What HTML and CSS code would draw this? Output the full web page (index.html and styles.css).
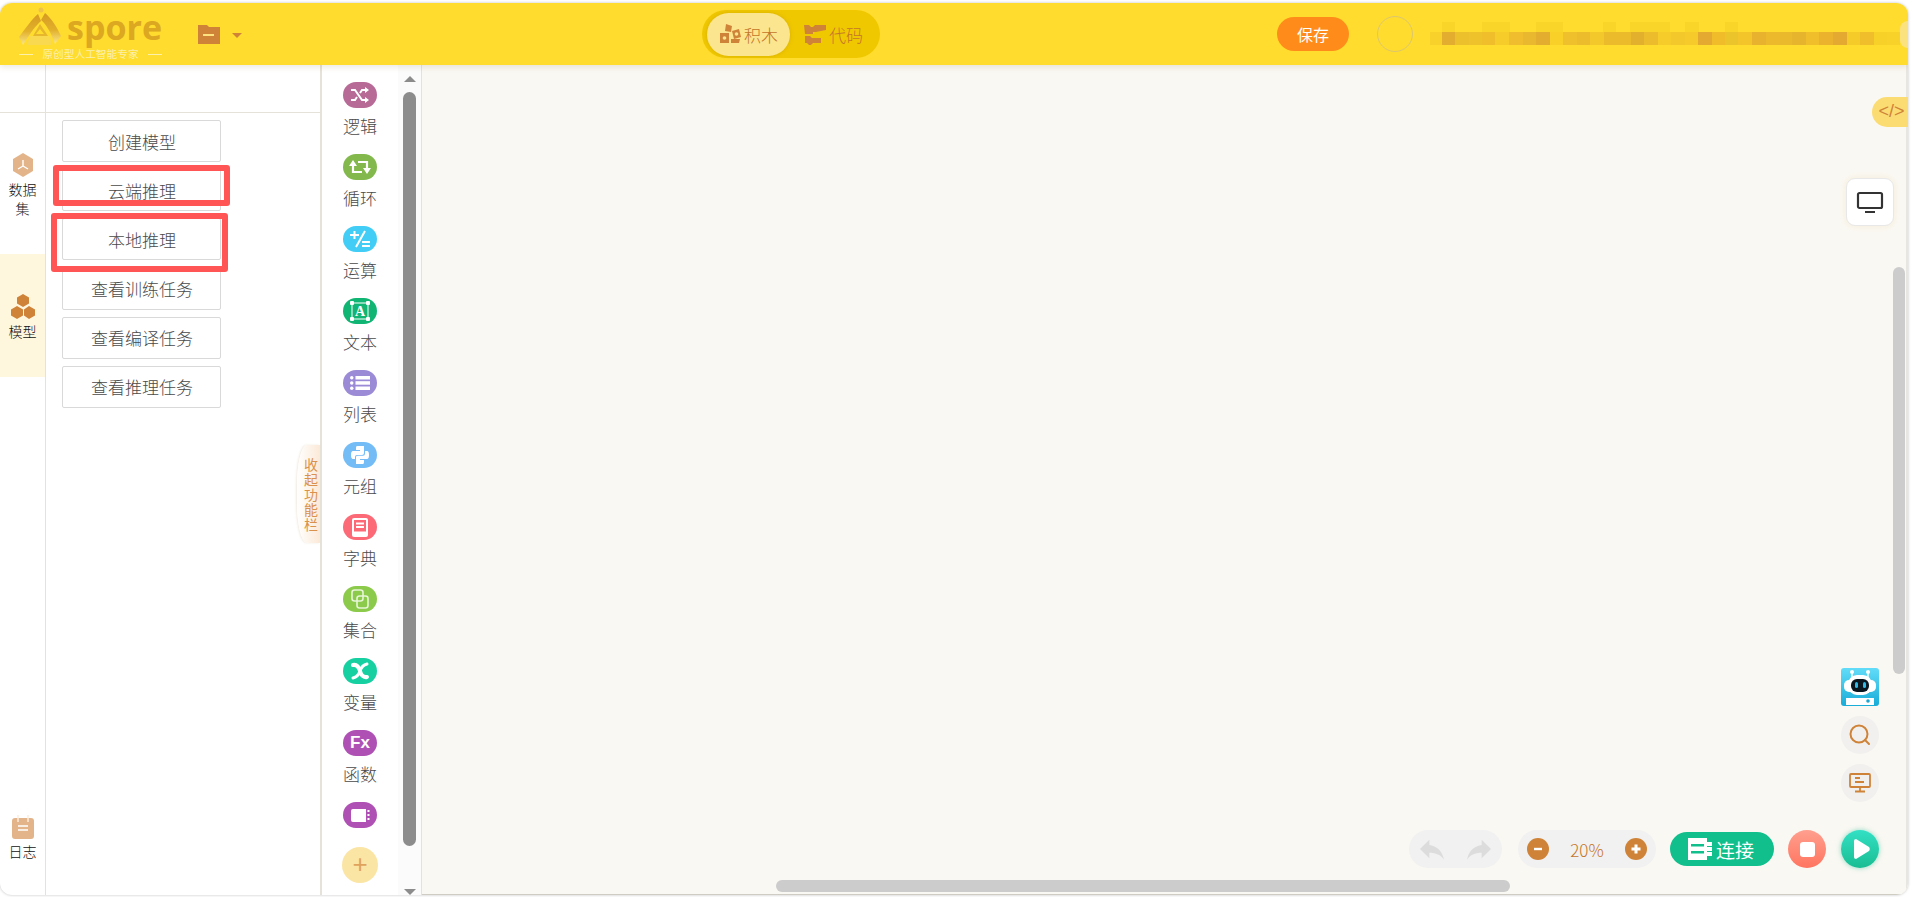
FILE: index.html
```html
<!DOCTYPE html>
<html lang="zh-CN">
  <head>
    <meta charset="UTF-8" />
    <title>spore</title>
    <link rel="stylesheet" href="styles.css">
  </head>
  <body>
    <div class="app">
      <!-- 顶部栏 -->
      <div class="header">
        <div class="logo">
          <div class="logo-top">
            <svg class="logo-mark" width="44" height="40" viewBox="0 0 44 40">
              <defs>
                <linearGradient id="logoGold" x1="0" y1="0" x2="0" y2="1">
                  <stop offset="0" stop-color="#d59a22" />
                  <stop offset="0.55" stop-color="#e2b02a" />
                  <stop offset="1" stop-color="#fbe78a" />
                </linearGradient>
              </defs>
              <circle cx="23" cy="3" r="2.500" fill="#efc34a" />
              <path d="M20 7 C14 12 7 22 1 30 L5 38 C10 30 16 20 23 14 Z" fill="url(#logoGold)" />
              <path d="M27 6 C33 11 39 20 43 29 L37 37 C34 28 29 18 23 13 Z" fill="url(#logoGold)" />
              <path d="M22 17 L30 29 H15 Z M22 22 L18 27 H26 Z" fill="#e6b72c" fill-rule="evenodd" />
              <path d="M12 29 H32 L34 38 H9 Z" fill="#f8d94f" />
            </svg>
            <span class="logo-name">spore</span>
          </div>
          <div class="logo-sub"><i></i><span>原创型人工智能专家</span><i></i></div>
        </div>

        <svg class="folder" width="22" height="20" viewBox="0 0 22 20">
          <path d="M0 1 H9 L11 3 H22 V20 H0 Z" fill="#cf8338" />
          <rect x="5" y="10" width="11" height="2" fill="#fde27f" />
        </svg>
        <span class="caret"></span>

        <div class="mode-switch">
          <div class="mode mode-active">
            <svg width="22" height="22" viewBox="0 0 22 22">
              <path d="M7 1 L13 3 L12 9 L6 8 Z M13 8 L20 6 L22 14 L15 16 Z M1 10 L10 10 L10 20 L1 20 Z M12 16 L21 16 L20 20 L12 20 Z" fill="#cf8338" />
              <circle cx="5.500" cy="15" r="1.800" fill="#fbe58f" />
              <circle cx="17.500" cy="11" r="1.800" fill="#fbe58f" />
            </svg>
            <span>积木</span>
          </div>
          <div class="mode">
            <svg width="22" height="22" viewBox="0 0 22 22">
              <path d="M0 2 H5 L7 4 H9 L11 2 H22 V7 L12 9 H9 V11 H1 Z" fill="#cf8338" />
              <path d="M1 13 H6 L8 15 H17 V20 H9 L7 22 H5 L3 20 H1 Z" fill="#cf8338" />
            </svg>
            <span>代码</span>
          </div>
        </div>

        <button class="save-btn">保存</button>
        <div class="avatar"></div>

        <!-- 打码区域 -->
        <svg class="mosaic" width="470" height="24" viewBox="0 0 470 24">
          <g fill="#f9d52a">
            <rect x="12" y="0" width="13" height="10" />
            <rect x="52" y="0" width="28" height="10" />
            <rect x="106" y="0" width="27" height="10" />
            <rect x="173" y="0" width="13" height="10" />
            <rect x="200" y="0" width="40" height="10" />
            <rect x="255" y="0" width="14" height="10" />
            <rect x="295" y="0" width="13" height="10" />
          </g>
          <g>
            <rect x="0" y="10" width="12" height="13" fill="#f8d22a" />
            <rect x="12" y="10" width="13" height="13" fill="#e3ae30" />
            <rect x="25" y="10" width="14" height="13" fill="#ebc02c" />
            <rect x="39" y="10" width="13" height="13" fill="#eec22a" />
            <rect x="52" y="10" width="13" height="13" fill="#f0be2a" />
            <rect x="65" y="10" width="14" height="13" fill="#f5cc2a" />
            <rect x="79" y="10" width="14" height="13" fill="#efbd2d" />
            <rect x="93" y="10" width="13" height="13" fill="#e9b82f" />
            <rect x="106" y="10" width="14" height="13" fill="#e3ad30" />
            <rect x="120" y="10" width="13" height="13" fill="#f8d028" />
            <rect x="133" y="10" width="14" height="13" fill="#efc02c" />
            <rect x="147" y="10" width="13" height="13" fill="#ecbc2c" />
            <rect x="160" y="10" width="14" height="13" fill="#f2c82a" />
            <rect x="174" y="10" width="27" height="13" fill="#ebbb2c" />
            <rect x="201" y="10" width="13" height="13" fill="#e3b02e" />
            <rect x="214" y="10" width="14" height="13" fill="#ecbc2c" />
            <rect x="228" y="10" width="13" height="13" fill="#f5cc2a" />
            <rect x="241" y="10" width="14" height="13" fill="#f3c82a" />
            <rect x="255" y="10" width="13" height="13" fill="#f5ca2a" />
            <rect x="268" y="10" width="14" height="13" fill="#e3a930" />
            <rect x="282" y="10" width="13" height="13" fill="#f0bc2a" />
            <rect x="295" y="10" width="13" height="13" fill="#ebc42c" />
            <rect x="308" y="10" width="14" height="13" fill="#f3c52a" />
            <rect x="322" y="10" width="14" height="13" fill="#e8b12e" />
            <rect x="336" y="10" width="13" height="13" fill="#ecb92c" />
            <rect x="349" y="10" width="13" height="13" fill="#ebb92c" />
            <rect x="362" y="10" width="14" height="13" fill="#e7b42e" />
            <rect x="376" y="10" width="13" height="13" fill="#efbe2a" />
            <rect x="389" y="10" width="14" height="13" fill="#ebb22d" />
            <rect x="403" y="10" width="14" height="13" fill="#e3a930" />
            <rect x="417" y="10" width="13" height="13" fill="#f5cb2a" />
            <rect x="430" y="10" width="14" height="13" fill="#efbe2a" />
            <rect x="444" y="10" width="13" height="13" fill="#f7d028" />
            <rect x="457" y="10" width="13" height="13" fill="#f8d228" />
          </g>
        </svg>
        <span class="user-tab"></span>
      </div>

      <div class="main">
        <!-- 左侧功能栏 -->
        <div class="rail">
          <div class="rail-head"></div>
          <div class="rail-item rail-first">
            <svg width="24" height="24" viewBox="0 0 24 24">
              <path d="M12 0 L22 6 V18 L12 24 L2 18 V6 Z" fill="#e3b48a" />
              <path d="M12 7 V13 M12 13 L7 16 M12 13 L17 16" stroke="#fff" stroke-width="1.400" fill="none" />
            </svg>
            <div class="rail-label">数据集</div>
          </div>
          <div class="rail-item active">
            <svg width="26" height="25" viewBox="0 0 26 25">
              <path d="M13 0 L19 3.500 V9.500 L13 13 L7 9.500 V3.500 Z" fill="#cf8338" />
              <path d="M7 12 L13 15.500 V21.500 L7 25 L1 21.500 V15.500 Z" fill="#cf8338" />
              <path d="M19 12 L25 15.500 V21.500 L19 25 L14 21.500 V15.500 Z" fill="#cf8338" />
            </svg>
            <div class="rail-label">模型</div>
          </div>
          <div class="rail-item rail-log">
            <svg width="24" height="24" viewBox="0 0 24 24">
              <rect x="1" y="3" width="22" height="21" rx="3" fill="#e3b48a" />
              <path d="M7 0 V7 M17 0 V7" stroke="#fbeedd" stroke-width="1.500" />
              <path d="M7 11 H17 M7 15 H17" stroke="#fff" stroke-width="1.500" />
            </svg>
            <div class="rail-label">日志</div>
          </div>
        </div>

        <div class="panel">
          <div class="panel-head"></div>
          <div class="panel-list">
            <button class="panel-btn">创建模型</button>
            <button class="panel-btn">云端推理</button>
            <button class="panel-btn">本地推理</button>
            <button class="panel-btn">查看训练任务</button>
            <button class="panel-btn">查看编译任务</button>
            <button class="panel-btn">查看推理任务</button>
          </div>
          <!-- 标注框 -->
          <div class="mark mark-cloud"></div>
          <div class="mark mark-local"></div>
          <div class="collapse">收起功能栏</div>
        </div>

        <!-- 积木分类 -->
        <div class="toolbox">
          <div class="cat-list">
            <div class="cat">
              <div class="pill pill-logic">
                <svg width="20" height="16" viewBox="0 0 20 16" fill="none" stroke="#fff" stroke-width="2">
                  <path d="M1 3 H5 L12 13 H16 M1 13 H5 L7 10 M10 6 L12 3 H16" />
                  <path d="M15 0 L19 3 L15 6 Z M15 10 L19 13 L15 16 Z" fill="#fff" stroke="none" />
                </svg>
              </div>
              <div class="cat-label">逻辑</div>
            </div>
            <div class="cat">
              <div class="pill pill-loop">
                <svg width="22" height="16" viewBox="0 0 22 16" fill="none" stroke="#fff" stroke-width="2.200">
                  <path d="M4 6 V13 H13 M18 10 V3 H9" />
                  <path d="M0 7 H8 L4 1 Z M14 9 H22 L18 15 Z" fill="#fff" stroke="none" />
                </svg>
              </div>
              <div class="cat-label">循环</div>
            </div>
            <div class="cat">
              <div class="pill pill-math">
                <svg width="20" height="18" viewBox="0 0 20 18" fill="none" stroke="#fff" stroke-width="2">
                  <path d="M0 5 H9 M4.500 1 V9 M15 1 L6 17 M12 12 H20 M12 16 H20" />
                </svg>
              </div>
              <div class="cat-label">运算</div>
            </div>
            <div class="cat">
              <div class="pill pill-text">
                <svg width="20" height="20" viewBox="0 0 20 20">
                  <rect x="2" y="2" width="16" height="16" fill="none" stroke="#fff" stroke-width="1" />
                  <g fill="#fff">
                    <rect x="0" y="0" width="4" height="4" rx="1" />
                    <rect x="16" y="0" width="4" height="4" rx="1" />
                    <rect x="0" y="16" width="4" height="4" rx="1" />
                    <rect x="16" y="16" width="4" height="4" rx="1" />
                  </g>
                  <text class="pill-a" x="10" y="15" text-anchor="middle">A</text>
                </svg>
              </div>
              <div class="cat-label">文本</div>
            </div>
            <div class="cat">
              <div class="pill pill-list">
                <svg width="20" height="14" viewBox="0 0 20 14" fill="#fff">
                  <rect x="0" y="0" width="3.500" height="3.500" rx="1.700" />
                  <rect x="0" y="5.200" width="3.500" height="3.500" rx="1.700" />
                  <rect x="0" y="10.500" width="3.500" height="3.500" rx="1.700" />
                  <rect x="5.500" y="0" width="14.500" height="3.500" />
                  <rect x="5.500" y="5.200" width="14.500" height="3.500" />
                  <rect x="5.500" y="10.500" width="14.500" height="3.500" />
                </svg>
              </div>
              <div class="cat-label">列表</div>
            </div>
            <div class="cat">
              <div class="pill pill-tuple">
                <svg width="18" height="18" viewBox="0 0 18 18" fill="#fff">
                  <path d="M6 0 H13 V7 Q13 9 11 9 H6 Q4 9 4 11 V13 H2 Q0 13 0 9 T2 5 H9 V4 H5 V2 Q5 0 6 0 Z" />
                  <path d="M12 18 H5 V11 Q5 9.800 7 9.800 H12 Q14 9.800 14 7.500 V5 H16 Q18 5 18 9 T16 13 H9 V14 H13 V16 Q13 18 12 18 Z" />
                </svg>
              </div>
              <div class="cat-label">元组</div>
            </div>
            <div class="cat">
              <div class="pill pill-dict">
                <svg width="16" height="19" viewBox="0 0 16 19">
                  <path d="M2 0 H14 Q16 0 16 2 V17 Q16 19 14 19 H2 Q0 19 0 17 V2 Q0 0 2 0 Z" fill="#fff" />
                  <rect x="2" y="2" width="12" height="11.500" fill="#fb6a76" />
                  <path d="M4 5.500 H12 M4 9 H12" stroke="#fff" stroke-width="1.800" />
                </svg>
              </div>
              <div class="cat-label">字典</div>
            </div>
            <div class="cat">
              <div class="pill pill-set">
                <svg width="18" height="20" viewBox="0 0 18 20" fill="none" stroke="#e8f5d8" stroke-width="1.600">
                  <rect x="1" y="1" width="11" height="11" rx="2.500" />
                  <rect x="6" y="7" width="11" height="12" rx="2.500" />
                </svg>
              </div>
              <div class="cat-label">集合</div>
            </div>
            <div class="cat">
              <div class="pill pill-var">
                <svg width="20" height="20" viewBox="0 0 20 20" fill="none" stroke="#fff" stroke-linecap="round">
                  <path d="M3 4 Q8 3 10 10 T17 16" stroke-width="4" />
                  <path d="M17 3 Q12 4 10 10 T3 17" stroke-width="3" />
                </svg>
              </div>
              <div class="cat-label">变量</div>
            </div>
            <div class="cat">
              <div class="pill pill-func"><span>Fx</span></div>
              <div class="cat-label">函数</div>
            </div>
            <div class="cat cat-last">
              <div class="pill pill-func">
                <svg width="19" height="13" viewBox="0 0 19 13" fill="#fff">
                  <path d="M2 0 H15 V13 H2 Q0 13 0 11 V2 Q0 0 2 0 Z" />
                  <rect x="16.500" y="1" width="2" height="2" />
                  <rect x="16.500" y="5" width="2" height="2" />
                  <rect x="16.500" y="9" width="2" height="2" />
                </svg>
              </div>
            </div>
            <div class="add-btn">+</div>
          </div>
          <div class="cat-scroll">
            <span class="arrow-up"></span>
            <span class="cat-thumb"></span>
            <span class="arrow-down"></span>
          </div>
        </div>

        <!-- 画布 -->
        <div class="canvas">
          <div class="code-tab">&lt;/&gt;</div>

          <div class="screen-btn">
            <svg width="28" height="22" viewBox="0 0 28 22" fill="none" stroke="#333" stroke-width="2">
              <rect x="2" y="2" width="24" height="15" rx="1.500" stroke-width="2.200" />
              <path d="M9 21 H19" />
            </svg>
          </div>

          <div class="side-tools">
            <svg class="robot" width="38" height="38" viewBox="0 0 38 38">
              <defs>
                <linearGradient id="robotBg" x1="0" y1="0" x2="0" y2="1">
                  <stop offset="0" stop-color="#62dcf8" />
                  <stop offset="1" stop-color="#18acd8" />
                </linearGradient>
              </defs>
              <rect width="38" height="38" rx="3" fill="url(#robotBg)" />
              <path d="M11 4 V10 M27 4 V10" stroke="#fff" stroke-width="1.400" />
              <circle cx="11" cy="4" r="2" fill="#fff" />
              <circle cx="27" cy="4" r="2" fill="#fff" />
              <rect x="3" y="12" width="32" height="12" rx="5" fill="#fff" />
              <rect x="7" y="7" width="24" height="20" rx="9" fill="#fff" />
              <rect x="10" y="11" width="18" height="13" rx="6" fill="#0a1620" />
              <rect x="14" y="14" width="3" height="6" rx="1.500" fill="#2fb9e4" />
              <rect x="22" y="14" width="3" height="6" rx="1.500" fill="#2fb9e4" />
              <rect x="5" y="30" width="28" height="7" fill="#fff" />
              <circle cx="27" cy="33" r="1.800" fill="#1ea5cf" />
            </svg>
            <div class="round-tool">
              <svg width="22" height="22" viewBox="0 0 22 22" fill="none" stroke="#cf8338" stroke-width="2">
                <circle cx="10" cy="10" r="8.500" />
                <path d="M16 16 L20 20" stroke-linecap="round" />
              </svg>
            </div>
            <div class="round-tool">
              <svg width="22" height="20" viewBox="0 0 22 20" fill="none" stroke="#cf8338" stroke-width="1.800">
                <rect x="1" y="1" width="20" height="13" rx="1" />
                <path d="M6 5 H11 M6 9 H15 M11 14 V18 M6 18.500 H16" />
              </svg>
            </div>
          </div>

          <div class="bottom-tools">
            <div class="tool-pill history">
              <svg width="32" height="32" viewBox="0 0 24 24" fill="#dcdcdc"><path d="M10 9V5l-7 7 7 7v-4.100c5 0 8.500 1.600 11 5.100-1-5-4-10-11-11z" /></svg>
              <svg width="32" height="32" viewBox="0 0 24 24" fill="#dcdcdc"><path d="M14 9V5l7 7-7 7v-4.100c-5 0-8.500 1.600-11 5.100 1-5 4-10 11-11z" /></svg>
            </div>
            <div class="tool-pill zoom">
              <span class="zoom-btn">
                <svg width="10" height="10" viewBox="0 0 10 10"><rect x="1" y="3.800" width="8" height="2.400" fill="#fff" /></svg>
              </span>
              <span class="zoom-value">20%</span>
              <span class="zoom-btn">
                <svg width="10" height="10" viewBox="0 0 10 10"><path d="M0.500 3.500 H3.500 V0.500 H6.500 V3.500 H9.500 V6.500 H6.500 V9.500 H3.500 V6.500 H0.500 Z" fill="#fff" /></svg>
              </span>
            </div>
            <button class="connect-btn">
              <svg width="24" height="22" viewBox="0 0 24 22">
                <path d="M0 0 H19 V4 H24 V8 H19 V9 H24 V13 H19 V14 H24 V18 H19 V22 H0 Z" fill="#fff" />
                <rect x="3" y="6" width="13" height="2.500" fill="#10bf8c" />
                <rect x="3" y="13" width="13" height="2.500" fill="#10bf8c" />
              </svg>
              <span>连接</span>
            </button>
            <div class="stop-btn"><span></span></div>
            <div class="play-btn">
              <svg width="16" height="20" viewBox="0 0 16 20"><path d="M2 0 L15 8 Q16.500 10 15 12 L2 20 Q0 20 0 18 V2 Q0 0 2 0 Z" fill="#fff" /></svg>
            </div>
          </div>

          <span class="scroll-v"></span>
          <span class="scroll-h"></span>
        </div>
      </div>
    </div>
  </body>
</html>
```
FILE: styles.css
```css
* {
  box-sizing: border-box;
}

html,
body {
  margin: 0;
  height: 100%;
  overflow: hidden;
}

body {
  background-color: #fff;
  font-family: "Noto Sans CJK SC", "Liberation Sans", sans-serif;
  font-weight: 300;
}

button {
  font-family: inherit;
  font-weight: inherit;
}

.app {
  display: flex;
  flex-direction: column;
  width: 1908px;
  height: 892px;
  margin-top: 3px;
  border-radius: 12px;
  overflow: hidden;
  box-shadow: 0 0 3px rgba(0, 0, 0, 0.25);
  background: #fff;
}

/* 顶部栏 */
.header {
  position: relative;
  z-index: 2;
  display: flex;
  align-items: center;
  flex: none;
  height: 62px;
  padding-left: 19px;
  background-color: #ffdc2e;
  box-shadow: 0 2px 6px rgba(120, 100, 40, 0.15);
}

.logo {
  flex: none;
  width: 143px;
}

.logo-top {
  display: flex;
  align-items: flex-start;
  height: 40px;
}

.logo-mark {
  flex: none;
  margin-left: -1px;
}

.logo-name {
  margin: 1px 0 0 5px;
  font-family: "Open Sans", sans-serif;
  font-size: 34px;
  font-weight: 700;
  line-height: 38px;
  color: #dca721;
}

.logo-sub {
  display: flex;
  align-items: center;
  justify-content: space-between;
  height: 14px;
  font-size: 10.7px;
  font-weight: 400;
  line-height: 14px;
  color: #fbf0ac;
}

.logo-sub i {
  width: 14px;
  height: 1px;
  background: #fbf0ac;
}

.folder {
  flex: none;
  margin-left: 36px;
}

.caret {
  width: 0;
  height: 0;
  margin-left: 12px;
  margin-top: 2px;
  border-left: 5px solid transparent;
  border-right: 5px solid transparent;
  border-top: 5px solid #cf8338;
}

.mode-switch {
  display: flex;
  align-items: center;
  flex: none;
  width: 178px;
  height: 48px;
  margin-left: 460px;
  padding: 0 5px;
  border-radius: 24px;
  background-color: #f0c800;
}

.mode {
  display: flex;
  align-items: center;
  height: 43px;
  color: #c4762a;
  font-size: 17px;
}

.mode span {
  margin-left: 3px;
}

.mode svg {
  flex: none;
}

.mode-active {
  width: 83px;
  padding-left: 12px;
  margin-right: 14px;
  border-radius: 22px;
  background-color: #fbe58f;
  box-shadow: 0 0 4px rgba(180, 140, 0, 0.4);
}

.save-btn {
  flex: none;
  width: 72px;
  height: 34px;
  margin-left: 397px;
  padding: 0;
  border: none;
  border-radius: 17px;
  background-color: #ff8c1a;
  color: #fff;
  font-size: 16px;
  font-weight: 400;
}

.avatar {
  flex: none;
  width: 36px;
  height: 36px;
  margin-left: 28px;
  border: 1px solid #dcc76f;
  border-radius: 50%;
}

.mosaic {
  flex: none;
  margin-left: 17px;
}

.user-tab {
  flex: none;
  width: 8px;
  height: 27px;
  border-radius: 14px 0 0 14px;
  background-color: #fbe27e;
}

.main {
  display: flex;
  flex: 1;
  min-height: 0;
}

/* 左侧功能栏 */
.rail {
  display: flex;
  flex-direction: column;
  flex: none;
  width: 46px;
  border-right: 1px solid #e5e2d9;
}

.rail-head,
.panel-head {
  flex: none;
  height: 48px;
  border-bottom: 1px solid #e5e2d9;
}

.rail-item {
  display: flex;
  flex-direction: column;
  align-items: center;
  flex: none;
  height: 123px;
  padding-top: 40px;
}

.rail-first {
  height: 141px;
}

.rail-item.active {
  background-color: #fff6de;
}

.rail-log {
  height: auto;
  margin-top: auto;
  padding-top: 0;
  padding-bottom: 34px;
}

.rail-label {
  width: 30px;
  margin-top: 3px;
  text-align: center;
  font-size: 14px;
  line-height: 19px;
  color: #111;
}

.panel {
  position: relative;
  flex: none;
  width: 274px;
}

.panel-list {
  display: flex;
  flex-direction: column;
  gap: 7.2px;
  padding: 7px 0 0 16px;
}

.panel-btn {
  width: 159px;
  height: 42px;
  padding: 0 0 0 1px;
  border: 1px solid #d9d9d9;
  border-radius: 2px;
  background: #fff;
  color: #4a4a4a;
  font-size: 17px;
}

.mark {
  position: absolute;
  border: 6px solid #ff5555;
  border-radius: 3px;
}

.mark-cloud {
  left: 7px;
  top: 100px;
  width: 177px;
  height: 41px;
}

.mark-local {
  left: 5px;
  top: 148px;
  width: 177px;
  height: 59px;
}

.collapse {
  position: absolute;
  right: 0;
  top: 380px;
  width: 23px;
  height: 98px;
  padding: 12px 0 0 7px;
  border-radius: 10px 0 0 10px / 40px 0 0 40px;
  background: linear-gradient(to right, #fff, #fbe9d8);
  box-shadow: -1px 0 2px rgba(200, 170, 130, 0.25);
  color: #d9914b;
  font-size: 14px;
  line-height: 15px;
  font-weight: 400;
}

/* 积木分类 */
.toolbox {
  display: flex;
  flex: none;
  width: 102px;
  border-left: 2px solid #e5e2d9;
  border-right: 1px solid #e5e2d9;
}

.cat-list {
  flex: none;
  width: 76px;
  padding-top: 17px;
}

.cat {
  display: flex;
  flex-direction: column;
  align-items: center;
  height: 72px;
}

.cat-last {
  height: 45px;
}

.pill {
  display: flex;
  align-items: center;
  justify-content: center;
  flex: none;
  width: 34px;
  height: 26px;
  border-radius: 13px;
}

.pill-logic { background-color: #b86a96; }
.pill-loop { background-color: #82b84c; }
.pill-math { background-color: #41cdf6; }
.pill-text { background-color: #10b573; }
.pill-list { background-color: #9b8ad6; }
.pill-tuple { background-color: #73bcf6; }
.pill-dict { background-color: #fb6a76; }
.pill-set { background-color: #8bca4a; }
.pill-var { background-color: #17d0a2; }
.pill-func { background-color: #ae50b4; }

.pill-func span {
  color: #fff;
  font-family: "Liberation Sans", sans-serif;
  font-size: 17px;
  font-weight: 700;
}

.pill-a {
  fill: #fff;
  font-family: "Liberation Serif", serif;
  font-size: 14px;
  font-weight: 700;
}

.cat-label {
  margin-top: 6px;
  font-size: 17px;
  line-height: 24px;
  color: #4a4a4a;
}

.add-btn {
  width: 36px;
  height: 36px;
  margin-left: 20px;
  border-radius: 50%;
  background-color: #fbe5a4;
  color: #e0a35c;
  text-align: center;
  font-family: "Liberation Sans", sans-serif;
  font-size: 26px;
  line-height: 35px;
}

.cat-scroll {
  display: flex;
  flex-direction: column;
  align-items: center;
  flex: 1;
  padding-top: 11px;
  background-color: #fbfbfb;
}

.arrow-up,
.arrow-down {
  width: 0;
  height: 0;
  border-left: 6px solid transparent;
  border-right: 6px solid transparent;
}

.arrow-up {
  border-bottom: 6px solid #8c8c8c;
}

.arrow-down {
  margin-top: 43px;
  border-top: 6px solid #8c8c8c;
}

.cat-thumb {
  width: 13px;
  height: 754px;
  margin-top: 10px;
  border-radius: 7px;
  background-color: #8c8c8c;
}

/* 画布 */
.canvas {
  position: relative;
  flex: 1;
  background-color: #faf8f3;
  box-shadow: inset -2px 0 #e8e6e0, inset 0 -1px #cfcdc3;
}

.code-tab {
  position: absolute;
  right: 0;
  top: 32px;
  width: 36px;
  height: 30px;
  padding-left: 3px;
  border-radius: 15px 0 0 15px;
  background-color: #fbdc72;
  color: #cf8338;
  text-align: center;
  font-family: "Liberation Sans", sans-serif;
  font-size: 18px;
  line-height: 29px;
}

.screen-btn {
  position: absolute;
  right: 14px;
  top: 113px;
  display: flex;
  align-items: center;
  justify-content: center;
  width: 48px;
  height: 48px;
  border: 1px solid #e8e8e8;
  border-radius: 9px;
  background: #fff;
  box-shadow: 0 0 6px rgba(240, 220, 170, 0.4);
}

.side-tools {
  position: absolute;
  right: 29px;
  top: 603px;
  display: flex;
  flex-direction: column;
  gap: 10px;
}

.robot {
  display: block;
}

.round-tool {
  display: flex;
  align-items: center;
  justify-content: center;
  width: 38px;
  height: 38px;
  border-radius: 50%;
  background-color: #f1f0ee;
}

.bottom-tools {
  position: absolute;
  right: 29px;
  top: 765px;
  display: flex;
  align-items: center;
}

.tool-pill {
  display: flex;
  align-items: center;
  height: 38px;
  border-radius: 19px;
  background-color: #f1f1f1;
}

.history {
  justify-content: space-between;
  width: 93px;
  padding: 0 7px;
}

.zoom {
  justify-content: space-between;
  width: 138px;
  margin-left: 16px;
  padding: 0 9px;
}

.zoom-btn {
  display: flex;
  align-items: center;
  justify-content: center;
  width: 22px;
  height: 22px;
  border-radius: 50%;
  background-color: #cf8338;
}

.zoom-value {
  font-size: 17px;
  color: #c4762a;
}

.connect-btn {
  display: flex;
  align-items: center;
  width: 104px;
  height: 34px;
  margin-left: 14px;
  padding: 0 0 0 18px;
  border: none;
  border-radius: 17px;
  background-color: #10bf8c;
  color: #fff;
  font-size: 19px;
  font-weight: 400;
}

.connect-btn span {
  margin-left: 4px;
}

.stop-btn {
  display: flex;
  align-items: center;
  justify-content: center;
  width: 38px;
  height: 38px;
  margin-left: 14px;
  border-radius: 50%;
  background: linear-gradient(#ff9f8e, #ff7560);
}

.stop-btn span {
  width: 15px;
  height: 15px;
  border-radius: 3px;
  background: #fff;
}

.play-btn {
  display: flex;
  align-items: center;
  justify-content: center;
  width: 38px;
  height: 38px;
  margin-left: 15px;
  padding-left: 3px;
  border-radius: 50%;
  background: linear-gradient(#33e0c4, #19bd92);
  box-shadow: 0 0 5px rgba(25, 189, 146, 0.5);
}

.scroll-v {
  position: absolute;
  right: 3px;
  top: 202px;
  width: 12px;
  height: 407px;
  border-radius: 6px;
  background-color: #ccc;
}

.scroll-h {
  position: absolute;
  left: 354px;
  top: 815px;
  width: 734px;
  height: 12px;
  border-radius: 6px;
  background-color: #ccc;
}
```
